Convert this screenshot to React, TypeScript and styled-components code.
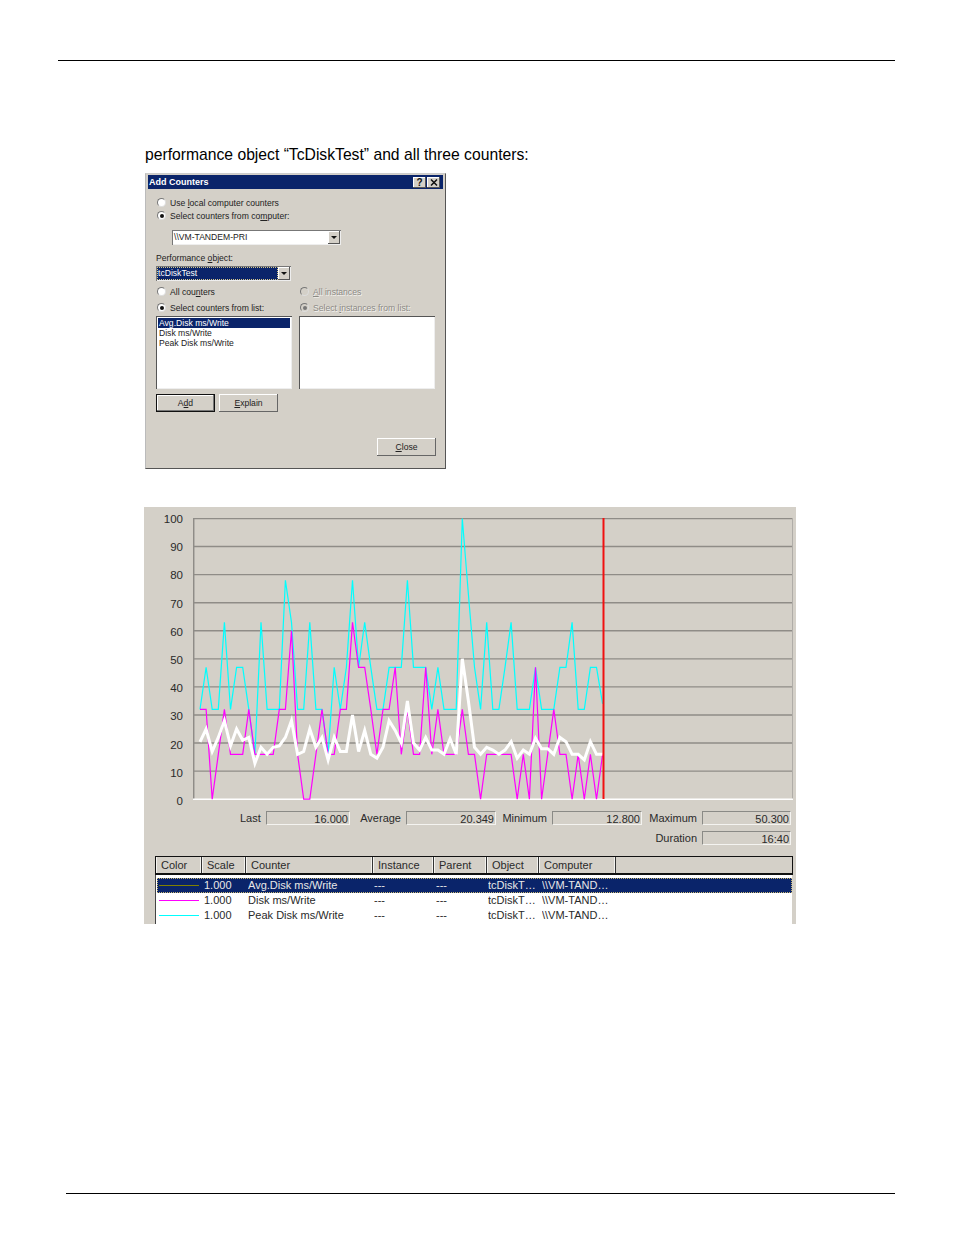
import React from "react";
import styled, { createGlobalStyle } from "styled-components";

const Global = createGlobalStyle`
  html, body { margin: 0; padding: 0; background: #fff; }
  body { font-family: "Liberation Sans", Arial, sans-serif; color: #000; }
`;

const Page = styled.div`
  width: 954px; height: 1235px; display: flex; flex-direction: column; box-sizing: border-box;
  padding-top: 60px;
`;
const TopRule = styled.div`height: 1px; background: #000; margin-left: 58px; width: 837px;`;
const BottomRule = styled.div`height: 1px; background: #000; margin: auto 0 41px 66px; width: 829px;`;
const Intro = styled.p`
  margin: 85px 0 0 145px; font-size: 15.7px; line-height: 18px; height: 18px;
`;

const Dialog = styled.div`
  margin: 9px 0 0 145px; width: 301px; height: 296px; box-sizing: border-box;
  background: #d4d0c8; border: 1px solid #555; border-top-color: #ccc; border-left-color: #bbb;
  padding: 1px 2px; display: flex; flex-direction: column;
  font-size: 8.6px; line-height: 12px; color: #222;
`;
const TitleBar = styled.div`
  height: 14px; background: #0a246a; color: #fff; font-weight: 700; font-size: 9px; line-height: 14px;
  padding: 0 1px 0 1px; display: flex; align-items: center; justify-content: space-between;
`;
const TitleButtons = styled.div`display: flex; gap: 1px; margin-right: 2px;`;
const TitleButton = styled.span`
  width: 13px; height: 11px; background: #d4d0c8; color: #111; font-size: 10px; line-height: 11px;
  font-weight: 700; text-align: center; box-shadow: inset -1px -1px #555, inset 1px 1px #fff;
  display: flex; align-items: center; justify-content: center;
`;
const DialogBody = styled.div`
  position: relative; flex: 1; display: flex; flex-direction: column; padding: 7px 7px 0 8px;
`;
const RadioRow = styled.div<{ $gap?: number; $off?: boolean }>`
  display: flex; align-items: center; gap: 4px; height: 13px; padding-left: 1px;
  margin-top: ${(p) => p.$gap ?? 0}px;
  color: ${(p) => (p.$off ? "#8c8a85" : "#222")};
  text-shadow: ${(p) => (p.$off ? "0.7px 0.7px 0 #f4f3f0" : "none")};
  white-space: nowrap;
`;
const Radio = styled.span<{ $on?: boolean; $off?: boolean }>`
  width: 9px; height: 9px; border-radius: 50%; flex: none; box-sizing: border-box;
  background: ${(p) => (p.$off ? "#d4d0c8" : "#fff")}; border: 1px solid #777;
  border-right-color: #ddd; border-bottom-color: #ddd; position: relative;
  &::after {
    content: ""; display: ${(p) => (p.$on ? "block" : "none")}; position: absolute; left: 1.5px; top: 1.5px;
    width: 4px; height: 4px; border-radius: 50%; background: ${(p) => (p.$off ? "#777" : "#111")};
  }
`;
const Combo = styled.div<{ $w: number; $left?: number; $gap?: number }>`
  width: ${(p) => p.$w}px; height: 15px; box-sizing: border-box; margin-left: ${(p) => p.$left ?? 0}px;
  margin-top: ${(p) => p.$gap ?? 0}px; background: #fff; padding: 1px;
  box-shadow: inset 1px 1px #777, inset -1px -1px #eee;
  display: flex; align-items: stretch;
`;
const ComboText = styled.div<{ $sel?: boolean }>`
  flex: 1; padding-left: 1px; line-height: 13px; white-space: nowrap;
  background: ${(p) => (p.$sel ? "#0a246a" : "#fff")}; color: ${(p) => (p.$sel ? "#fff" : "#222")};
  outline: ${(p) => (p.$sel ? "1px dotted #d8c98a" : "none")}; outline-offset: -1px;
`;
const ComboArrow = styled.div`
  width: 12px; background: #d4d0c8; box-shadow: inset -1px -1px #555, inset 1px 1px #fff;
  display: flex; align-items: center; justify-content: center;
  &::before {
    content: ""; border-left: 3px solid transparent; border-right: 3px solid transparent; border-top: 3px solid #111;
  }
`;
const Label = styled.div<{ $gap?: number }>`margin-top: ${(p) => p.$gap ?? 0}px; height: 12px; line-height: 12px;`;
const Columns = styled.div`
  display: grid; grid-template-columns: 136px 136px; column-gap: 7px; margin-top: 4px;
`;
const ColumnStack = styled.div`display: flex; flex-direction: column;`;
const ListBox = styled.div`
  height: 73px; margin-top: 2px; box-sizing: border-box; background: #fff; padding: 2px;
  box-shadow: inset 1px 1px #555, inset -1px -1px #eee;
`;
const ListItem = styled.div<{ $sel?: boolean }>`
  height: 10px; line-height: 10px; padding-left: 1px; white-space: nowrap;
  background: ${(p) => (p.$sel ? "#0a246a" : "transparent")}; color: ${(p) => (p.$sel ? "#fff" : "#222")};
`;
const ButtonRow = styled.div`display: flex; gap: 4px; margin-top: 5px;`;
const Button = styled.div<{ $def?: boolean }>`
  width: 59px; height: 18px; box-sizing: border-box; background: #d4d0c8; line-height: 18px; text-align: center;
  box-shadow: ${(p) =>
    p.$def
      ? "inset 0 0 0 1px #111, inset -2px -2px #777, inset 2px 2px #fff"
      : "inset -1px -1px #666, inset 1px 1px #fff"};
`;
const CloseRow = styled.div`display: flex; justify-content: flex-end; margin: 26px 0 0;`;

const Panel = styled.div`
  margin: 38px 0 0 144px; width: 652px; height: 417px; box-sizing: border-box; overflow: hidden;
  background: #d4d0c8; font-size: 11px; color: #2a2a2a; display: flex; flex-direction: column;
`;
const ChartRow = styled.div`display: flex; height: 297px; padding-top: 5px; box-sizing: border-box; flex: none;`;
const AxisLabels = styled.div`
  width: 39px; height: 296px; flex: none; display: flex; flex-direction: column; justify-content: space-between;
  align-items: flex-end; line-height: 14px; font-size: 11.5px;
`;
const Plot = styled.svg`display: block; margin: 6px 0 0 10px; flex: none;`;
const StatsRows = styled.div`
  display: flex; flex-direction: column; gap: 6px; padding-right: 5px; margin-top: 7px; flex: none;
`;
const StatsLine = styled.div`display: flex; justify-content: flex-end;`;
const Stat = styled.div<{ $w: number }>`
  width: ${(p) => p.$w}px; display: flex; align-items: center; justify-content: flex-end; gap: 5px; white-space: nowrap;
`;
const StatValue = styled.div<{ $w: number }>`
  width: ${(p) => p.$w}px; height: 14px; box-sizing: border-box; text-align: right; padding-right: 1px;
  line-height: 14px; border: 1px solid; border-color: #8a8a86 #f4f3f0 #f4f3f0 #8a8a86;
`;
const Table = styled.div`margin: 11px 3px 0 11px; flex: 1; display: flex; flex-direction: column;`;
const Head = styled.div`
  height: 19px; box-sizing: border-box; border: 1px solid #111; border-bottom-width: 2px; display: flex; flex: none;
`;
const HeadCell = styled.div<{ $w?: number }>`
  ${(p) => (p.$w ? `width: ${p.$w}px; flex: none;` : "flex: 1;")}
  box-sizing: border-box; padding-left: 5px; line-height: 17px; border-right: ${(p) => (p.$w ? "1px solid #333" : "none")};
  box-shadow: ${(p) => (p.$w ? "inset -1px 0 #f4f3f0, inset 1px 0 #f4f3f0" : "none")};
`;
const ListPanel = styled.div`
  flex: 1; background: #fff; margin-right: 1px; padding: 3px 0 0 2px; box-shadow: inset 1px 0 #444;
`;
const Row = styled.div<{ $sel?: boolean }>`
  height: 15px; display: flex; align-items: center; line-height: 15px; box-sizing: border-box; white-space: nowrap;
  background: ${(p) => (p.$sel ? "#0a246a" : "transparent")}; color: ${(p) => (p.$sel ? "#e8e8e8" : "#2a2a2a")};
  outline: ${(p) => (p.$sel ? "1px dotted #c9b872" : "none")}; outline-offset: -1px;
`;
const Swatch = styled.div<{ $c: string }>`
  width: 40px; height: 1px; margin: 0 5px 0 2px; background: ${(p) => p.$c}; flex: none;
`;
const Cell = styled.div<{ $w: number }>`width: ${(p) => p.$w}px; flex: none; overflow: hidden;`;

const cyan = [32,47,32,32,63,32,47,47,32,16,63,32,32,32,78,63,32,32,63,32,32,16,47,32,47,78,47,63,47,32,32,47,47,47,78,47,47,47,32,47,32,32,32,100,73,47,32,63,32,32,47,63,32,32,32,47,32,32,32,47,47,63,32,32,47,47,34];
const magenta = [32,32,0,16,32,16,16,16,32,16,16,16,16,32,32,60,16,0,0,16,32,16,16,32,32,63,47,47,32,16,32,32,47,16,32,16,16,47,16,32,16,16,16,32,16,16,0,16,16,16,16,16,0,16,0,47,0,16,32,16,16,0,16,0,16,0,16];
const white = [20.4,25,17,22,28,19,25,21,22,12.8,18.5,16,18.5,19,22,28,16,17,25,18.5,22,14,22,17,17,30,17,24.5,16,14.6,18.5,28,24.5,20,35,20,17.5,22,17.5,17.5,16,21.5,16,50,35,18.5,16,18.5,17.5,16,17.5,20.5,14.6,17.5,16,21.7,18,18,16,22,20.5,16,16,14,20.5,16,16];

const py = (v: number) => 0.5 + (100 - v) * 2.807;
const pts = (d: number[]) => d.map((v, i) => `${7 + 6.1 * i},${py(v).toFixed(1)}`).join(" ");
const ticks = [100, 90, 80, 70, 60, 50, 40, 30, 20, 10, 0];

const columns: [string, number | undefined][] = [
  ["Color", 46], ["Scale", 44], ["Counter", 127], ["Instance", 61], ["Parent", 53], ["Object", 52], ["Computer", 77], ["", undefined],
];
const rows = [
  { color: "#808000", name: "Avg.Disk ms/Write", sel: true },
  { color: "#ff00ff", name: "Disk ms/Write" },
  { color: "#00ffff", name: "Peak Disk ms/Write" },
];

export default function App() {
  return (
    <Page>
      <Global />
      <TopRule />
      <Intro>performance object “TcDiskTest” and all three counters:</Intro>

      <Dialog>
        <TitleBar>
          <span>Add Counters</span>
          <TitleButtons>
            <TitleButton>?</TitleButton>
            <TitleButton>
              <svg width="8" height="7" viewBox="0 0 8 7"><path d="M1 0.5 7 6.5M7 0.5 1 6.5" stroke="#111" strokeWidth="1.5" /></svg>
            </TitleButton>
          </TitleButtons>
        </TitleBar>
        <DialogBody>
          <RadioRow>
            <Radio />
            <span>Use <u>l</u>ocal computer counters</span>
          </RadioRow>
          <RadioRow>
            <Radio $on />
            <span>Select counters from co<u>m</u>puter:</span>
          </RadioRow>
          <Combo $w={169} $left={16} $gap={8}>
            <ComboText>\\VM-TANDEM-PRI</ComboText>
            <ComboArrow />
          </Combo>
          <Label $gap={7}>Performance <u>o</u>bject:</Label>
          <Combo $w={135} $gap={2}>
            <ComboText $sel>tcDiskTest</ComboText>
            <ComboArrow />
          </Combo>
          <Columns>
            <ColumnStack>
              <RadioRow>
                <Radio />
                <span>All cou<u>n</u>ters</span>
              </RadioRow>
              <RadioRow $gap={3}>
                <Radio $on />
                <span>Select counters from list:</span>
              </RadioRow>
              <ListBox>
                <ListItem $sel>Avg.Disk ms/Write</ListItem>
                <ListItem>Disk ms/Write</ListItem>
                <ListItem>Peak Disk ms/Write</ListItem>
              </ListBox>
            </ColumnStack>
            <ColumnStack>
              <RadioRow $off>
                <Radio $off />
                <span><u>A</u>ll instances</span>
              </RadioRow>
              <RadioRow $off $gap={3}>
                <Radio $on $off />
                <span>Select <u>i</u>nstances from list:</span>
              </RadioRow>
              <ListBox />
            </ColumnStack>
          </Columns>
          <ButtonRow>
            <Button $def>A<u>d</u>d</Button>
            <Button><u>E</u>xplain</Button>
          </ButtonRow>
          <CloseRow>
            <Button><u>C</u>lose</Button>
          </CloseRow>
        </DialogBody>
      </Dialog>

      <Panel>
        <ChartRow>
          <AxisLabels>
            {ticks.map((t) => <span key={t}>{t}</span>)}
          </AxisLabels>
          <Plot width="600" height="283" viewBox="0 0 600 283">
            {ticks.slice(0, -1).map((t) => (
              <line key={t} x1="0" x2="600" y1={py(t)} y2={py(t)} stroke="#8f8c87" strokeWidth="1.4" />
            ))}
            <line x1="0.7" x2="0.7" y1="0" y2="281" stroke="#8f8c87" strokeWidth="1.5" />
            <line x1="599.5" x2="599.5" y1="0" y2="281" stroke="#b0ada8" strokeWidth="1" />
            <line x1="0" x2="600" y1={py(0)} y2={py(0)} stroke="#fff" strokeWidth="1.4" />
            <polyline points={pts(cyan)} fill="none" stroke="#00ffff" strokeWidth="1.2" />
            <polyline points={pts(magenta)} fill="none" stroke="#ff00ff" strokeWidth="1.2" />
            <polyline points={pts(white)} fill="none" stroke="#ffffff" strokeWidth="3" />
            <line x1="410.5" x2="410.5" y1="0" y2="281" stroke="#f01010" strokeWidth="2" />
          </Plot>
        </ChartRow>
        <StatsRows>
          <StatsLine>
            <Stat $w={110}>Last<StatValue $w={90}>16.000</StatValue></Stat>
            <Stat $w={146}>Average<StatValue $w={90}>20.349</StatValue></Stat>
            <Stat $w={146}>Minimum<StatValue $w={90}>12.800</StatValue></Stat>
            <Stat $w={149}>Maximum<StatValue $w={89}>50.300</StatValue></Stat>
          </StatsLine>
          <StatsLine>
            <Stat $w={149}>Duration<StatValue $w={89}>16:40</StatValue></Stat>
          </StatsLine>
        </StatsRows>
        <Table>
          <Head>
            {columns.map(([name, w], i) => <HeadCell key={i} $w={w}>{name}</HeadCell>)}
          </Head>
          <ListPanel>
            {rows.map((r) => (
              <Row key={r.name} $sel={r.sel}>
                <Swatch $c={r.color} />
                <Cell $w={44}>1.000</Cell>
                <Cell $w={126}>{r.name}</Cell>
                <Cell $w={62}>---</Cell>
                <Cell $w={52}>---</Cell>
                <Cell $w={54}>tcDiskT…</Cell>
                <Cell $w={80}>\\VM-TAND…</Cell>
              </Row>
            ))}
          </ListPanel>
        </Table>
      </Panel>
      <BottomRule />
    </Page>
  );
}
